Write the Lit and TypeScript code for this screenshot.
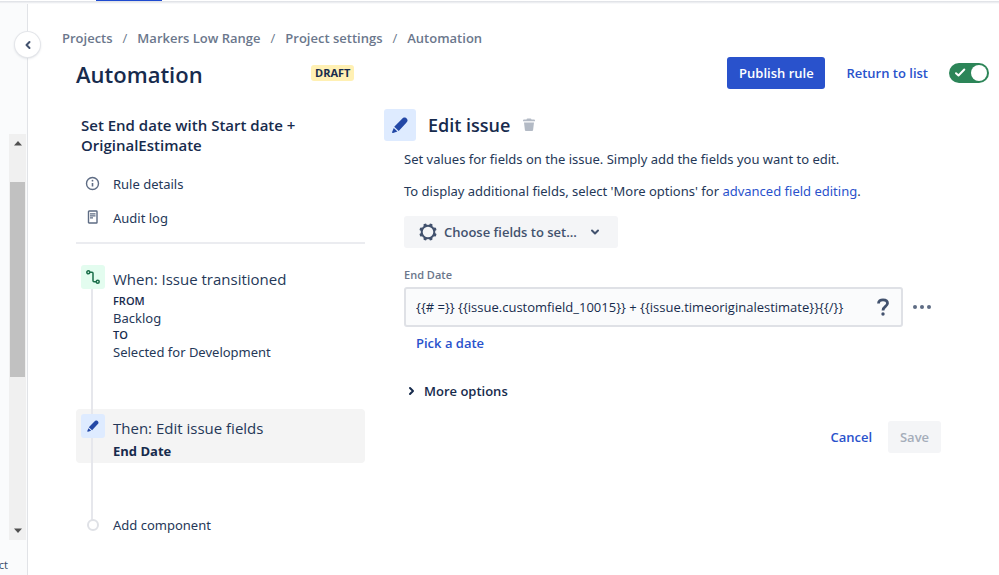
import { LitElement, html, css, svg } from "lit";
import { customElement, state } from "lit/decorators.js";

const pencil = (size: number) => html`
  <svg width=${size} height=${size} viewBox="0 0 24 24" aria-hidden="true">
    ${svg`<path fill="#2348a6" d="M5.700 14 13.800 5.600c1.200-1.200 2.200-2 3.600-1.700 1.500.4 2.500 1.400 2.800 2.700.2 1.200-.5 2.100-1.300 2.900L10.600 18.500zM5.200 15.200l4 3.900-4.700 1.500c-.7.2-1.300-.3-1.100-1z"/>`}
  </svg>`;

const teeth = [0, 45, 90, 135, 180, 225, 270, 315];

@customElement("app-root")
export class AppRoot extends LitElement {
  @state() private enabled = true;

  static styles = css`
    :host {
      display: block;
      font-family: "Noto Sans", "Open Sans", sans-serif;
      font-size: 13px;
      line-height: 20px;
      color: #253858;
      background: #fff;
    }
    * { box-sizing: border-box; }
    button, input { font: inherit; color: inherit; border: 0; margin: 0; }
    button { padding: 0; background: none; cursor: pointer; }
    a { color: inherit; text-decoration: none; }
    h1, h2, p, ol, ul { margin: 0; padding: 0; list-style: none; }
    svg { display: block; flex: none; }

    .page { display: grid; grid-template-rows: 4px 1fr; min-height: 100vh; }
    .topnav { background: linear-gradient(#fff 1px, #dfe1e6 1px, #e4e6ea 2px, #f5f6f8 3px, #fcfcfd); }
    .tab { width: 66px; height: 1px; margin-left: 96px; background: #1f4bd0; }
    .shell { display: grid; grid-template-columns: 28px minmax(0, 1fr); }

    .side {
      position: relative;
      display: flex;
      flex-direction: column;
      padding-top: 130px;
      background: #fafbfc;
      border-right: 1px solid #e1e3e7;
    }
    .scroll {
      flex: 1;
      display: flex;
      flex-direction: column;
      align-items: center;
      align-self: flex-end;
      width: 17px;
      margin-right: 1px;
      padding: 7px 0;
      background: #f0f0f0;
    }
    .thumb { width: 15px; height: 195px; margin: 36px 0 auto; background: #c1c1c1; }
    .side-foot { display: flex; justify-content: flex-end; width: 8px; height: 35px; padding-top: 15px; font-size: 11px; color: #42526e; }
    .collapse {
      position: absolute;
      top: 28px;
      right: -13px;
      z-index: 1;
      display: grid;
      place-items: center;
      width: 25px;
      height: 25px;
      border-radius: 50%;
      background: #fff;
      box-shadow: 0 0 0 1px #e4e6ea, 0 1px 3px #c9cdd4;
    }

    .crumbs, h1, h2, .badge, .actions, .rule-name, .caps, .strong, .choose, .label, .pick, .expand, .buttons {
      font-family: "Open Sans", "Noto Sans", sans-serif;
      font-weight: 600;
    }
    .step-title, .field { font-family: "Open Sans", "Noto Sans", sans-serif; }

    main { padding: 24px 10px 32px 34px; }
    .crumbs ol { display: flex; gap: 10px; color: #6b778c; }
    .crumbs li { display: flex; gap: 10px; }
    .crumbs span { font-weight: 400; }
    .head { display: flex; align-items: center; height: 32px; margin: 9px 0 0 14px; }
    h1 { width: 235px; padding-top: 2px; font-size: 22px; line-height: 32px; color: #172b4d; }
    .badge {
      padding: 0 4px;
      border-radius: 3px;
      background: #fff0b3;
      font-size: 11px;
      line-height: 16px;
      font-weight: 700;
      color: #172b4d;
    }
    .actions { display: flex; align-items: center; margin-left: auto; gap: 21px; }
    .primary { width: 98px; height: 32px; border-radius: 3px; background: #2952cc; color: #fff; }
    .link { color: #2952cc; }
    .toggle { position: relative; display: block; width: 40px; height: 20px; }
    .toggle input {
      appearance: none;
      display: block;
      width: 40px;
      height: 20px;
      padding: 2px;
      border-radius: 10px;
      background: #7a869a;
      cursor: pointer;
    }
    .toggle input::before {
      content: "";
      display: block;
      width: 16px;
      height: 16px;
      border-radius: 50%;
      background: #fff;
    }
    .toggle input:checked { background: #2c8558; }
    .toggle input:checked::before { margin-left: auto; }
    .toggle svg { position: absolute; top: 4px; left: 5px; pointer-events: none; }

    .columns {
      display: grid;
      grid-template-columns: 289px minmax(0, 1fr);
      gap: 19px;
      margin: 20px 48px 0 14px;
    }
    .rule-name { padding: 6px 5px 0; font-size: 15px; line-height: 20px; color: #172b4d; }
    .meta { padding: 12px 0 7px; border-bottom: 2px solid #ebecf0; }
    .meta a { display: flex; align-items: center; gap: 13px; height: 34px; padding-left: 8px; }

    .steps { position: relative; padding-top: 16px; }
    .steps::before {
      content: "";
      position: absolute;
      top: 30px;
      bottom: 20px;
      left: 15px;
      width: 2px;
      background: #e6e7ec;
    }
    .step { display: grid; grid-template-columns: 24px 1fr; gap: 8px; padding: 5px 5px 3px; border-radius: 4px; }
    .step + .step { margin-top: 45px; }
    .chosen { background: #f4f4f4; }
    .tile {
      position: relative;
      display: grid;
      place-items: center;
      width: 24px;
      height: 24px;
      border-radius: 3px;
    }
    .green { background: #e3fcef; }
    .blue { background: #deebff; }
    .step-title { font-size: 15px; line-height: 28px; }
    .caps { font-size: 11px; line-height: 16px; color: #172b4d; }
    .value { line-height: 18px; }
    .strong { line-height: 18px; font-weight: 700; color: #172b4d; }
    .dot { width: 12px; height: 12px; border: 2px solid #dfe1e6; border-radius: 50%; background: #fff; }
    .add { display: block; text-align: left; line-height: 24px; }

    .panel-head { display: flex; align-items: center; gap: 12px; height: 32px; }
    .panel-head .tile { width: 32px; height: 32px; }
    h2 { font-size: 18px; line-height: 32px; color: #172b4d; }
    .panel-body { padding: 6px 0 0 20px; }
    .panel-body p { margin-bottom: 8px; line-height: 24px; }
    .choose {
      display: flex;
      align-items: center;
      gap: 6px;
      width: 214px;
      height: 32px;
      margin-top: 13px;
      padding: 0 14px;
      border-radius: 3px;
      background: #f4f5f7;
      color: #42526e;
    }
    .label { display: block; margin-top: 19px; font-size: 11px; line-height: 16px; color: #6b778c; }
    .field-row { display: flex; margin-top: 4px; }
    .field {
      display: flex;
      align-items: center;
      flex: 1;
      height: 40px;
      padding: 0 12px 0 10px;
      border: 2px solid #dfe1e6;
      border-radius: 3px;
      background: #fafbfc;
    }
    .field input { flex: 1; min-width: 0; padding: 0; background: none; outline: 0; color: #172b4d; }
    .more { display: grid; place-items: center; width: 38px; }
    .pick { display: block; margin: 6px 0 0 12px; }
    .expand { display: flex; align-items: center; gap: 8px; margin-top: 28px; color: #172b4d; }
    .buttons { display: flex; justify-content: flex-end; gap: 16px; margin-top: 20px; }
    .save { width: 53px; height: 32px; border-radius: 3px; background: #f4f5f7; color: #a5adba; }
  `;

  render() {
    return html`
      <div class="page">
        <div class="topnav"><div class="tab"></div></div>
        <div class="shell">
          <aside class="side">
            <button class="collapse" aria-label="Collapse sidebar">
              <svg width="8" height="10" viewBox="0 0 8 10" fill="none" stroke="#42526e" stroke-width="2" stroke-linecap="round" stroke-linejoin="round"><path d="M5.500 2 2.500 5l3 3" /></svg>
            </button>
            <div class="scroll">
              <svg width="8" height="5"><path d="M0 4.500 4 0l4 4.500z" fill="#505050" /></svg>
              <div class="thumb"></div>
              <svg width="8" height="5"><path d="M0 .5h8L4 5z" fill="#505050" /></svg>
            </div>
            <div class="side-foot">ct</div>
          </aside>
          <main>
            <nav class="crumbs" aria-label="Breadcrumbs">
              <ol>
                <li><a href="#projects">Projects</a><span>/</span></li>
                <li><a href="#project">Markers Low Range</a><span>/</span></li>
                <li><a href="#settings">Project settings</a><span>/</span></li>
                <li><a href="#automation">Automation</a></li>
              </ol>
            </nav>
            <header class="head">
              <h1>Automation</h1>
              <span class="badge">DRAFT</span>
              <div class="actions">
                <button class="primary">Publish rule</button>
                <a class="link" href="#list">Return to list</a>
                <label class="toggle">
                  <input type="checkbox" role="switch" aria-label="Rule enabled" .checked=${this.enabled}
                    @change=${(e: Event) => (this.enabled = (e.target as HTMLInputElement).checked)} />
                  <svg width="12" height="11" viewBox="0 0 12 11" fill="none" stroke="#fff" stroke-width="2" stroke-linecap="round" stroke-linejoin="round"><path d="M2 6.200 4.500 8.500 10.300 2.500" /></svg>
                </label>
              </div>
            </header>
            <div class="columns">
              <section>
                <div class="rule-name">Set End date with Start date + OriginalEstimate</div>
                <div class="meta">
                  <a href="#details">
                    <svg width="16" height="16" viewBox="0 0 16 16" fill="none" stroke="#5e6c84"><circle cx="8.500" cy="7.500" r="6" stroke-width="1.400" /><path d="M8.500 7v3.500" stroke-width="1.600" /><circle cx="8.500" cy="4.700" r=".9" fill="#5e6c84" stroke="none" /></svg>
                    Rule details
                  </a>
                  <a href="#audit">
                    <svg width="16" height="16" viewBox="0 0 16 16" fill="none" stroke="#5e6c84"><rect x="4.500" y="1" width="8.500" height="12" rx=".6" stroke-width="1.400" /><path d="M6 3.800h5.500M6 5.800h5.500M6 7.800h3" stroke-width="1.200" /></svg>
                    Audit log
                  </a>
                </div>
                <ol class="steps">
                  <li class="step">
                    <span class="tile green">
                      <svg width="16" height="16" viewBox="0 0 16 16" fill="none" stroke="#1b6e4a" stroke-width="1.500"><circle cx="3.300" cy="3.300" r="1.500" /><circle cx="12.700" cy="12.700" r="1.500" /><path d="M4.800 3.300H7q1 0 1 1v7.400q0 1 1 1h2.200" /></svg>
                    </span>
                    <div>
                      <div class="step-title">When: Issue transitioned</div>
                      <div class="caps">FROM</div>
                      <div class="value">Backlog</div>
                      <div class="caps">TO</div>
                      <div class="value">Selected for Development</div>
                    </div>
                  </li>
                  <li class="step chosen">
                    <span class="tile blue">${pencil(16)}</span>
                    <div>
                      <div class="step-title">Then: Edit issue fields</div>
                      <div class="strong">End Date</div>
                    </div>
                  </li>
                  <li class="step">
                    <span class="tile"><span class="dot"></span></span>
                    <button class="add">Add component</button>
                  </li>
                </ol>
              </section>
              <section>
                <div class="panel-head">
                  <span class="tile blue">${pencil(22)}</span>
                  <h2>Edit issue</h2>
                  <button aria-label="Delete component">
                    <svg width="14" height="14" viewBox="0 0 14 14" fill="#b3bac5"><path d="M1 2.500Q1 1.500 2 1.500h2.500Q4.700.5 5.500.5h3q.8 0 1 1H12q1 0 1 1v.7H1zM2 4.500h10l-.9 7.600q-.1.900-1 .9H3.900q-.9 0-1-.9z" /></svg>
                  </button>
                </div>
                <div class="panel-body">
                  <p>Set values for fields on the issue. Simply add the fields you want to edit.</p>
                  <p>To display additional fields, select 'More options' for <a class="link" href="#advanced">advanced field editing</a>.</p>
                  <button class="choose">
                    <svg width="20" height="20" viewBox="0 0 20 20" fill="#42526e">
                      <circle cx="10" cy="10" r="6.300" fill="none" stroke="#42526e" stroke-width="2" />
                      ${teeth.map((a) => svg`<rect x="8.400" y="1.200" width="3.200" height="3" rx="1" transform="rotate(${a + 22.5} 10 10)" />`)}
                    </svg>
                    <span>Choose fields to set...</span>
                    <svg width="20" height="16" viewBox="0 0 20 16" fill="none" stroke="#42526e" stroke-width="2" stroke-linecap="round" stroke-linejoin="round"><path d="m9 6.500 3 3 3-3" /></svg>
                  </button>
                  <label class="label" for="end-date">End Date</label>
                  <div class="field-row">
                    <div class="field">
                      <input id="end-date" type="text" value="{{# =}} {{issue.customfield_10015}} + {{issue.timeoriginalestimate}}{{/}}" />
                      <button aria-label="Help">
                        <svg width="12" height="18" viewBox="0 0 12 18" fill="none" stroke="#42526e" stroke-width="2.800"><path d="M1.500 5.500C1.500 3 3.500 1.800 6 1.800s4.500 1.200 4.500 3.500C10.500 8.500 6 8.300 6 12.500" /><circle cx="6" cy="16" r="1.700" fill="#42526e" stroke="none" /></svg>
                      </button>
                    </div>
                    <button class="more" aria-label="More actions">
                      <svg width="18" height="4" viewBox="0 0 18 4" fill="#5e6c84"><circle cx="2" cy="2" r="2" /><circle cx="9" cy="2" r="2" /><circle cx="16" cy="2" r="2" /></svg>
                    </button>
                  </div>
                  <button class="pick link">Pick a date</button>
                  <button class="expand">
                    <svg width="12" height="12" viewBox="0 0 12 12" fill="none" stroke="#172b4d" stroke-width="2" stroke-linecap="round" stroke-linejoin="round"><path d="m6 3 3 3-3 3" /></svg>
                    More options
                  </button>
                  <div class="buttons">
                    <button class="link">Cancel</button>
                    <button class="save" disabled>Save</button>
                  </div>
                </div>
              </section>
            </div>
          </main>
        </div>
      </div>
    `;
  }
}
